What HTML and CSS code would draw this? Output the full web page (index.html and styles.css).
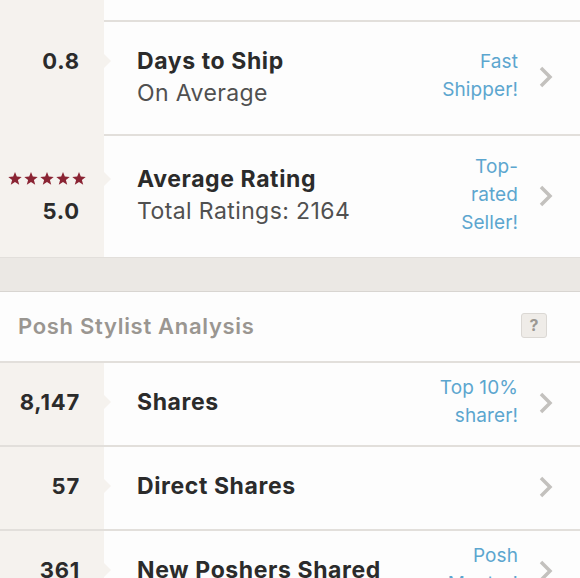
FILE: index.html
```html
<!DOCTYPE html>
<html>
<head>
    <meta charset="utf-8">
    <link rel="stylesheet" href="styles.css">
</head>
<body>
    <div class="stats-list">
        <div class="stat-row stat-row-top">
            <div class="stat-num"></div>
            <div class="stat-main"></div>
        </div>

        <div class="stat-row stat-row-ship">
            <div class="stat-num">
                <div class="num-line notch">0.8</div>
                <div class="num-line"></div>
            </div>
            <div class="stat-main">
                <div class="stat-info">
                    <div class="stat-title">Days to Ship</div>
                    <div class="stat-sub">On Average</div>
                </div>
                <div class="stat-badge">Fast<br>Shipper!</div>
                <svg class="chevron" width="14" height="22" viewBox="0 0 14 22"><polyline points="2,2 11,11 2,20" /></svg>
            </div>
        </div>

        <div class="stat-row stat-row-rating">
            <div class="stat-num">
                <div class="num-line notch">
                    <svg class="stars" width="78" height="14" viewBox="0 0 78 14">
                        <polygon points="7,0 8.8,4.6 13.7,4.9 9.9,8 11.2,12.8 7,10.1 2.8,12.8 4.1,8 0.3,4.9 5.2,4.6" />
                        <polygon transform="translate(16 0)" points="7,0 8.8,4.6 13.7,4.9 9.9,8 11.2,12.8 7,10.1 2.8,12.8 4.1,8 0.3,4.9 5.2,4.6" />
                        <polygon transform="translate(32 0)" points="7,0 8.8,4.6 13.7,4.9 9.9,8 11.2,12.8 7,10.1 2.8,12.8 4.1,8 0.3,4.9 5.2,4.6" />
                        <polygon transform="translate(48 0)" points="7,0 8.8,4.6 13.7,4.9 9.9,8 11.2,12.8 7,10.1 2.8,12.8 4.1,8 0.3,4.9 5.2,4.6" />
                        <polygon transform="translate(64 0)" points="7,0 8.8,4.6 13.7,4.9 9.9,8 11.2,12.8 7,10.1 2.8,12.8 4.1,8 0.3,4.9 5.2,4.6" />
                    </svg>
                </div>
                <div class="num-line">5.0</div>
            </div>
            <div class="stat-main">
                <div class="stat-info">
                    <div class="stat-title">Average Rating</div>
                    <div class="stat-sub">Total Ratings: 2164</div>
                </div>
                <div class="stat-badge">Top-<br>rated<br>Seller!</div>
                <svg class="chevron" width="14" height="22" viewBox="0 0 14 22"><polyline points="2,2 11,11 2,20" /></svg>
            </div>
        </div>

        <div class="section-gap"></div>

        <div class="section-header">
            <h3 class="section-title">Posh Stylist Analysis</h3>
            <span class="help-btn">?</span>
        </div>

        <div class="stat-row stat-row-share">
            <div class="stat-num">
                <div class="num-line notch">8,147</div>
            </div>
            <div class="stat-main">
                <div class="stat-info">
                    <div class="stat-title">Shares</div>
                </div>
                <div class="stat-badge">Top 10%<br>sharer!</div>
                <svg class="chevron" width="14" height="22" viewBox="0 0 14 22"><polyline points="2,2 11,11 2,20" /></svg>
            </div>
        </div>

        <div class="stat-row stat-row-share">
            <div class="stat-num">
                <div class="num-line notch">57</div>
            </div>
            <div class="stat-main">
                <div class="stat-info">
                    <div class="stat-title">Direct Shares</div>
                </div>
                <svg class="chevron" width="14" height="22" viewBox="0 0 14 22"><polyline points="2,2 11,11 2,20" /></svg>
            </div>
        </div>

        <div class="stat-row stat-row-share">
            <div class="stat-num">
                <div class="num-line notch">361</div>
            </div>
            <div class="stat-main">
                <div class="stat-info">
                    <div class="stat-title">New Poshers Shared</div>
                </div>
                <div class="stat-badge">Posh<br>Mentor!</div>
                <svg class="chevron" width="14" height="22" viewBox="0 0 14 22"><polyline points="2,2 11,11 2,20" /></svg>
            </div>
        </div>
    </div>
</body>
</html>
```

FILE: styles.css
```css
body {
    margin: 0;
    font-family: Inter, Lato, sans-serif;
    background-color: #fdfdfd;
    color: #2b2b2b;
    overflow: hidden;
}

.stats-list {
    width: 580px;
}

.stat-row {
    display: flex;
    border-bottom: 2px solid #e2dfdb;
    background-color: #fdfdfd;
}

.stat-row-top {
    height: 20px;
}

.stat-row-ship {
    height: 112px;
}

.stat-row-rating {
    height: 121px;
    border-bottom: none;
}

.stat-row-share {
    height: 82px;
}

.stat-num {
    width: 104px;
    flex-shrink: 0;
    box-sizing: border-box;
    padding-right: 24px;
    background-color: #f5f2ee;
    display: flex;
    flex-direction: column;
    justify-content: center;
    position: relative;
}

.num-line {
    height: 32px;
    line-height: 32px;
    text-align: right;
    font-size: 22px;
    font-weight: 700;
    letter-spacing: 0.8px;
    color: #2b2b2b;
    position: relative;
}

.stat-row-ship .stat-num,
.stat-row-rating .stat-num {
    margin-top: -3px;
}

.stat-row-share .num-line {
    margin-top: -5px;
}

.notch::after {
    content: "";
    position: absolute;
    right: -31px;
    top: 9px;
    border-left: 7px solid #f5f2ee;
    border-top: 7px solid transparent;
    border-bottom: 7px solid transparent;
}

.stars {
    display: inline-block;
    vertical-align: middle;
    margin-right: -6px;
    margin-top: -4px;
    fill: #8a2433;
}

.stat-main {
    flex: 1;
    display: flex;
    align-items: center;
    padding-left: 33px;
    padding-right: 27px;
}

.stat-info {
    flex: 1;
    min-width: 0;
    margin-top: -3px;
}

.stat-row-share .stat-info {
    margin-top: -5px;
}

.stat-title {
    font-size: 23px;
    font-weight: 700;
    line-height: 32px;
    letter-spacing: 0.6px;
    color: #2b2b2b;
}

.stat-sub {
    font-size: 23px;
    font-weight: 400;
    line-height: 32px;
    letter-spacing: 0.4px;
    color: #505050;
}

.stat-badge {
    text-align: right;
    font-size: 19px;
    line-height: 28px;
    letter-spacing: 0.1px;
    color: #5ca6cf;
    margin-right: 21px;
    margin-top: -4px;
}

.chevron {
    flex-shrink: 0;
    fill: none;
    stroke: #c3c1be;
    stroke-width: 3.5;
    margin-top: -2px;
}

.section-gap {
    height: 33px;
    background-color: #ebe8e4;
    border-top: 1px solid #e2dfdb;
    border-bottom: 1px solid #d8d5d1;
}

.section-header {
    height: 69px;
    display: flex;
    align-items: center;
    justify-content: space-between;
    padding: 0 33px 0 18px;
    border-bottom: 2px solid #e2dfdb;
    background-color: #fdfdfd;
}

.section-title {
    margin: 0 0 2px 0;
    font-size: 22px;
    font-weight: 600;
    letter-spacing: 0.7px;
    color: #9a9691;
}

.help-btn {
    width: 24px;
    height: 23px;
    line-height: 23px;
    text-align: center;
    font-size: 16px;
    font-weight: 700;
    color: #9c9893;
    background-color: #efece8;
    border: 1px solid #dbd8d4;
    border-radius: 3px;
    margin-top: -3px;
}
```
